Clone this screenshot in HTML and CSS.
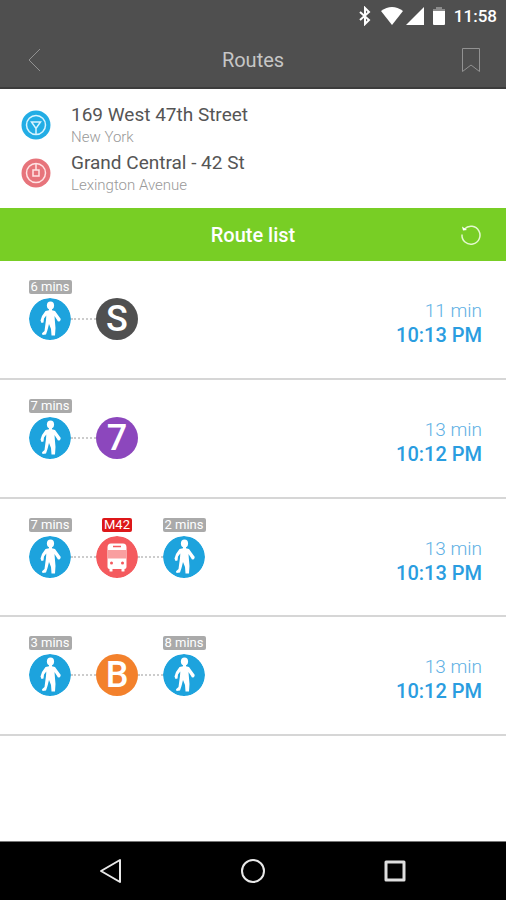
FILE: index.html
```html
<!DOCTYPE html>
<html lang="en">
<head>
<meta charset="utf-8">
<meta name="viewport" content="width=device-width, initial-scale=1">
<title>Routes</title>
<link rel="stylesheet" href="styles.css">
</head>
<body>
<svg class="defs" aria-hidden="true">
  <symbol id="walker" viewBox="0 0 42 42">
    <circle cx="21" cy="21" r="21" fill="#1da3dd"/>
    <ellipse cx="21.500" cy="7.500" rx="3.600" ry="4" fill="#fff"/>
    <path d="M20 10h3v2.200l3 .8 2.500 3.500 3.300 4.500-.8 2.300-2 .2-3.500-5.500.4 5 .6 7-.5 7.500h-3.500l-.5-6.500-2-5-1.500 6-1.500 4.500-3.500.5-.5-1.800 2.500-2.200.8-6 .7-5 .3-4.500-2.300 3-.5 4-2 .5-1-2.500 1.500-4.500 3.500-5 3.500-.8z" fill="#fff"/>
  </symbol>
  <symbol id="bus" viewBox="0 0 42 42">
    <circle cx="21" cy="21" r="21" fill="#f45a5e"/>
    <path d="M15 7.500h12q3.500 0 3.500 4V31q0 2-2 2v2q0 .5-.5.500h-2q-.5 0-.5-.5v-2h-9v2q0 .5-.5.500h-2q-.5 0-.5-.5v-2q-2 0-2-2V11.500q0-4 3.500-4z" fill="#fff"/>
    <path d="M17 10.500h8" stroke="#f45a5e" stroke-width="1.500"/>
    <path d="M11.500 14h19v8.500h-19z" fill="#f99fa0"/>
    <circle cx="15.500" cy="27" r="1.500" fill="#f45a5e"/>
    <circle cx="26.500" cy="27" r="1.500" fill="#f45a5e"/>
  </symbol>
</svg>
<header class="top">
  <div class="status">
    <svg width="14" height="20" viewBox="0 0 14 20" fill="none" stroke="#fff" stroke-width="2"><path d="M2 6l9 8-4 4V2l4 4-9 8"/></svg>
    <svg class="wifi" width="24" height="18" viewBox="0 0 24 18"><path d="M1 4Q12-4 23 4L12 18z" fill="#fff"/></svg>
    <svg width="18" height="18" viewBox="0 0 18 18"><path d="M18 0v18H0z" fill="#fff"/></svg>
    <svg class="battery" width="12" height="18" viewBox="0 0 12 18"><path d="M3 0h6v2h3v3H0V2h3z" fill="#8c8c8c"/><path d="M0 4h12v13q0 1-1 1H1q-1 0-1-1z" fill="#fff"/></svg>
    <time>11:58</time>
  </div>
  <div class="bar">
    <button type="button" class="icon-button" aria-label="Back"><svg width="22" height="24" viewBox="0 0 22 24" fill="none" stroke="#929292"><path d="M16 1L5 12l11 11"/></svg></button>
    <h1>Routes</h1>
    <button type="button" class="icon-button" aria-label="Save route"><svg width="22" height="26" viewBox="0 0 22 26" fill="none" stroke="#929292" stroke-width="1"><path d="M2.500 1.500h17v23L11 18l-8.500 6.500z"/></svg></button>
  </div>
</header>
<main>
  <section class="places">
    <div class="place">
      <svg width="30" height="30" viewBox="0 0 30 30" fill="none"><circle cx="15" cy="15" r="14.500" fill="#22ade5"/><circle cx="15" cy="15" r="9.500" stroke="#d9f4ff" stroke-width="1.500"/><path d="M10.500 12h9L15 18.500zM15 18v6" stroke="#d9f4ff" stroke-width="1.500"/></svg>
      <div><h2>169 West 47th Street</h2><p>New York</p></div>
    </div>
    <div class="place">
      <svg width="30" height="30" viewBox="0 0 30 30" fill="none"><circle cx="15" cy="15" r="14.500" fill="#e7747b"/><circle cx="15" cy="15" r="9.500" stroke="#ffe3e4" stroke-width="1.500"/><path d="M12 12h6v6h-6zM15 6v6" stroke="#ffe3e4" stroke-width="1.500"/></svg>
      <div><h2>Grand Central - 42 St</h2><p>Lexington Avenue</p></div>
    </div>
  </section>
  <div class="bar list-bar">
    <span></span>
    <h2>Route list</h2>
    <button type="button" class="icon-button" aria-label="Refresh"><svg width="22" height="22" viewBox="0 0 22 22" fill="none" stroke="#e4f8cf" stroke-width="1.500"><path d="M4.500 5a9 9 0 1 1-2.500 5.500"/><path d="M2 2.500l1 4 4-.5z" fill="#fff" stroke="none"/></svg></button>
  </div>
  <ul class="routes">
    <li class="route">
      <div class="steps">
        <div class="step"><span class="tag">6 mins</span><svg class="disc"><use href="#walker"/></svg></div>
        <i class="link"></i>
        <div class="step"><span class="disc line-s">S</span></div>
      </div>
      <div class="when"><span>11 min</span><time>10:13 PM</time></div>
    </li>
    <li class="route">
      <div class="steps">
        <div class="step"><span class="tag">7 mins</span><svg class="disc"><use href="#walker"/></svg></div>
        <i class="link"></i>
        <div class="step"><span class="disc line-7">7</span></div>
      </div>
      <div class="when"><span>13 min</span><time>10:12 PM</time></div>
    </li>
    <li class="route">
      <div class="steps">
        <div class="step"><span class="tag">7 mins</span><svg class="disc"><use href="#walker"/></svg></div>
        <i class="link"></i>
        <div class="step"><span class="tag tag-bus">M42</span><svg class="disc"><use href="#bus"/></svg></div>
        <i class="link"></i>
        <div class="step"><span class="tag">2 mins</span><svg class="disc"><use href="#walker"/></svg></div>
      </div>
      <div class="when"><span>13 min</span><time>10:13 PM</time></div>
    </li>
    <li class="route">
      <div class="steps">
        <div class="step"><span class="tag">3 mins</span><svg class="disc"><use href="#walker"/></svg></div>
        <i class="link"></i>
        <div class="step"><span class="disc line-b">B</span></div>
        <i class="link"></i>
        <div class="step"><span class="tag">8 mins</span><svg class="disc"><use href="#walker"/></svg></div>
      </div>
      <div class="when"><span>13 min</span><time>10:12 PM</time></div>
    </li>
  </ul>
</main>
<nav class="system">
  <button type="button" aria-label="Back"><svg width="24" height="26" viewBox="0 0 24 26" fill="none" stroke="#e8e8e8" stroke-width="2" stroke-linejoin="round"><path d="M21 2v22L2 13z"/></svg></button>
  <button type="button" aria-label="Home"><svg width="26" height="26" viewBox="0 0 26 26" fill="none" stroke="#e8e8e8" stroke-width="2"><circle cx="13" cy="13" r="11"/></svg></button>
  <button type="button" aria-label="Recent apps"><svg width="24" height="24" viewBox="0 0 24 24" fill="none" stroke="#dedede" stroke-width="3" stroke-linejoin="round"><path d="M3 3h18v18H3z"/></svg></button>
</nav>
</body>
</html>
```
FILE: styles.css
```css
* {
  box-sizing: border-box;
  margin: 0;
  padding: 0;
}

body {
  display: flex;
  flex-direction: column;
  min-height: 100vh;
  background: #fff;
  color: #555;
  font-family: Roboto, "Liberation Sans", sans-serif;
}

svg {
  display: block;
  flex: none;
}

button {
  border: 0;
  background: none;
  cursor: pointer;
}

.defs {
  position: absolute;
  width: 0;
  height: 0;
}

.top {
  background: #4f4f4f;
  border-bottom: 2px solid #3c3c3c;
}

.status {
  display: flex;
  align-items: center;
  justify-content: flex-end;
  height: 32px;
  padding-right: 9px;
  color: #fff;
  font-size: 17px;
  font-weight: 500;
}

.wifi {
  margin: 0 2px 0 8px;
}

.battery {
  margin: 0 9px;
}

.bar {
  display: grid;
  grid-template-columns: 22px 1fr 22px;
  align-items: center;
  height: 55px;
  padding: 0 24px;
  text-align: center;
}

.icon-button {
  display: flex;
  justify-content: center;
}

.bar h1,
.bar h2 {
  font-size: 20px;
  font-weight: 400;
  line-height: 24px;
}

.bar h1 {
  color: #c6c6c6;
}

.list-bar {
  height: 53px;
  background: #78ce25;
  color: #fff;
}

.list-bar h2 {
  font-weight: 500;
}

.places {
  padding: 14px 21px 9px;
}

.place {
  display: flex;
  gap: 20px;
  align-items: center;
  height: 48px;
}

.place > svg {
  margin-top: -5px;
}

.place h2 {
  font-size: 19px;
  font-weight: 400;
  line-height: 24px;
}

.place p {
  color: #999;
  font-size: 15px;
  font-weight: 300;
  line-height: 20px;
  margin-bottom: 4px;
}

.routes {
  display: grid;
  grid-auto-rows: 1fr;
  min-height: 475px;
  list-style: none;
}

.route {
  display: flex;
  align-items: flex-start;
  justify-content: space-between;
  padding: 19px 24px 0 29px;
  border-bottom: 2px solid #d6d6d6;
}

.steps {
  display: flex;
  align-items: flex-end;
  height: 60px;
}

.step {
  display: flex;
  flex-direction: column;
  align-items: center;
  gap: 4px;
  width: 42px;
}

.tag {
  padding: 0 2px;
  border-radius: 2px;
  background: #aaa;
  color: #fff;
  font-size: 13px;
  line-height: 14px;
  white-space: nowrap;
}

.tag-bus {
  background: #dd1719;
}

.disc {
  width: 42px;
  height: 42px;
  border-radius: 50%;
  color: #fff;
  font-size: 36px;
  font-weight: 500;
  line-height: 42px;
  text-align: center;
}

.line-s {
  background: #505050;
}

.line-7 {
  background: #8c47bd;
}

.line-b {
  background: #f3812c;
}

.link {
  width: 25px;
  margin-bottom: 20px;
  border-bottom: 2px dotted #ccc;
}

.when {
  display: flex;
  flex-direction: column;
  align-items: flex-end;
  padding-top: 19px;
  color: #2a9de0;
  font-size: 20px;
  font-weight: 500;
  line-height: 24px;
}

.when span {
  color: #5db0e4;
  font-size: 19px;
  font-weight: 300;
}

.system {
  display: flex;
  align-items: center;
  justify-content: space-around;
  height: 59px;
  margin-top: auto;
  padding: 0 40px;
  border-top: 1px solid #777;
  background: #000;
}
```
